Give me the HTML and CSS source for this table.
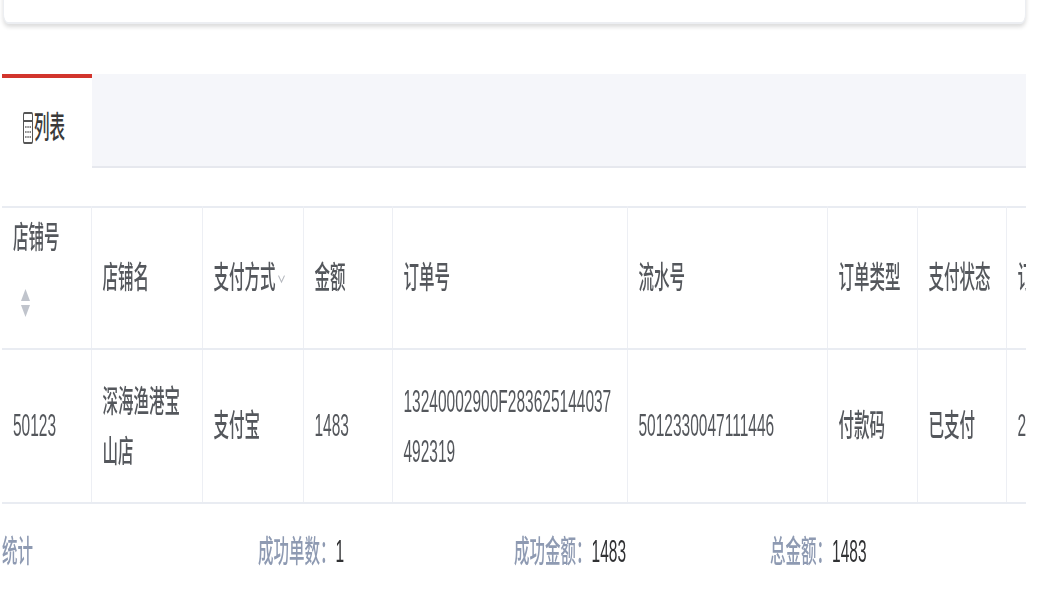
FILE: index.html
```html
<!DOCTYPE html>
<html lang="zh-CN">
<head>
<meta charset="utf-8">
<title>列表</title>
<link rel="stylesheet" href="styles.css">
</head>
<body>
<div class="stage">
  <div class="card"></div>

  <div class="tabs">
    <div class="tab">
      <svg class="tab-icon" width="10" height="16" viewBox="0 0 10 16">
        <rect x="0.5" y="0.5" width="9" height="15" rx="1" fill="none" stroke="#555" stroke-width="1"/>
        <line x1="0.5" y1="4.5" x2="9.5" y2="4.5" stroke="#555" stroke-width="1"/>
        <rect x="2.2" y="7" width="1.3" height="1" fill="#777"/>
        <rect x="4.4" y="7" width="1.3" height="1" fill="#777"/>
        <rect x="6.6" y="7" width="1.3" height="1" fill="#777"/>
        <rect x="2.2" y="9.5" width="1.3" height="1" fill="#777"/>
        <rect x="4.4" y="9.5" width="1.3" height="1" fill="#777"/>
        <rect x="6.6" y="9.5" width="1.3" height="1" fill="#777"/>
        <rect x="2.2" y="12" width="1.3" height="1" fill="#777"/>
        <rect x="4.4" y="12" width="1.3" height="1" fill="#777"/>
        <rect x="6.6" y="12" width="1.3" height="1" fill="#777"/>
      </svg>
      <span>列表</span>
    </div>
    <div class="tab-rest"></div>
  </div>

  <div class="table-wrap">
    <table class="grid">
      <colgroup>
        <col class="c-89"><col class="c-111"><col class="c-101"><col class="c-89"><col class="c-235"><col class="c-200"><col class="c-90"><col class="c-89"><col class="c-160">
      </colgroup>
      <thead>
        <tr>
          <th class="th-sort">店铺号
            <svg class="sort" width="11" height="15" viewBox="0 0 11 15">
              <polygon points="5.5,0.5 10,6.5 1,6.5" fill="#c0c4cc"/>
              <polygon points="1,8.5 10,8.5 5.5,14.5" fill="#c0c4cc"/>
            </svg>
          </th>
          <th>店铺名</th>
          <th>支付方式<svg class="chev" width="7" height="5" viewBox="0 0 7 5"><polyline points="0.5,0.8 3.5,4 6.5,0.8" fill="none" stroke="#b4b7bd" stroke-width="0.8"/></svg></th>
          <th>金额</th>
          <th>订单号</th>
          <th>流水号</th>
          <th>订单类型</th>
          <th>支付状态</th>
          <th>订单时间</th>
        </tr>
      </thead>
      <tbody>
        <tr>
          <td>50123</td>
          <td>深海渔港宝山店</td>
          <td>支付宝</td>
          <td>1483</td>
          <td>13240002900F283625144037492319</td>
          <td>5012330047111446</td>
          <td>付款码</td>
          <td>已支付</td>
          <td>2021-05-10</td>
        </tr>
      </tbody>
    </table>
  </div>

  <div class="summary">
    <div class="label">统计</div>
    <div><span class="label">成功单数：</span><span class="value">1</span></div>
    <div><span class="label">成功金额：</span><span class="value">1483</span></div>
    <div><span class="label">总金额：</span><span class="value">1483</span></div>
  </div>
</div>
</body>
</html>
```

FILE: styles.css
```css
html {
  overflow: hidden;
}

html, body {
  margin: 0;
  padding: 0;
  background: #ffffff;
}

body {
  height: 605px;
}

.stage {
  display: flow-root;
  width: 1043px;
  height: 303px;
  transform: scaleY(2);
  transform-origin: 0 0;
  font-family: "Liberation Sans", "Noto Sans CJK SC", sans-serif;
  font-size: 15.5px;
  font-weight: 500;
  color: #54575c;
}

.card {
  margin: -10px 17px 0 3px;
  height: 21px;
  background: #ffffff;
  border: 1px solid #eceef2;
  border-top: none;
  border-radius: 0 0 5px 5px;
  box-shadow: 0 1.5px 3px rgba(0, 0, 0, 0.14);
}

.tabs {
  display: flex;
  margin: 25px 17px 0 2px;
  height: 47px;
}

.tab {
  width: 90px;
  box-sizing: border-box;
  border-top: 2px solid #d2352d;
  background: #ffffff;
  display: flex;
  align-items: center;
  padding: 4px 0 0 21px;
  color: #3a3a3a;
  line-height: 20px;
}

.tab-icon {
  display: block;
  margin-right: 1px;
}

.tab-rest {
  flex: 1;
  background: #f5f6fa;
  border-bottom: 1px solid #e6e8ee;
}

.table-wrap {
  margin: 19px 17px 0 2px;
  overflow: hidden;
}

.grid {
  border-collapse: collapse;
  table-layout: fixed;
  width: 1164px;
}

.c-89 { width: 89px; }
.c-90 { width: 90px; }
.c-101 { width: 101px; }
.c-111 { width: 111px; }
.c-160 { width: 160px; }
.c-200 { width: 200px; }
.c-235 { width: 235px; }

.grid th,
.grid td {
  border-right: 1px solid #edeff4;
  border-bottom: 1px solid #e9ecf2;
  padding: 0 11px;
  text-align: left;
  font-weight: 500;
  vertical-align: middle;
  color: #54575c;
}

.grid th {
  border-top: 1px solid #e9ecf2;
  height: 65px;
  line-height: 20px;
  white-space: nowrap;
}

.grid td {
  height: 76px;
  line-height: 25.5px;
  word-break: break-all;
}

.grid .th-sort {
  vertical-align: top;
  padding-top: 5px;
}

.sort {
  display: block;
  margin: 15px 0 0 7px;
}

.chev {
  margin-left: 2px;
  vertical-align: middle;
}

.summary {
  display: grid;
  grid-template-columns: repeat(4, 256px);
  margin: 14px 0 0 2px;
  line-height: 20px;
}

.label {
  color: #8e9ab2;
}

.value {
  color: #303133;
}
```
